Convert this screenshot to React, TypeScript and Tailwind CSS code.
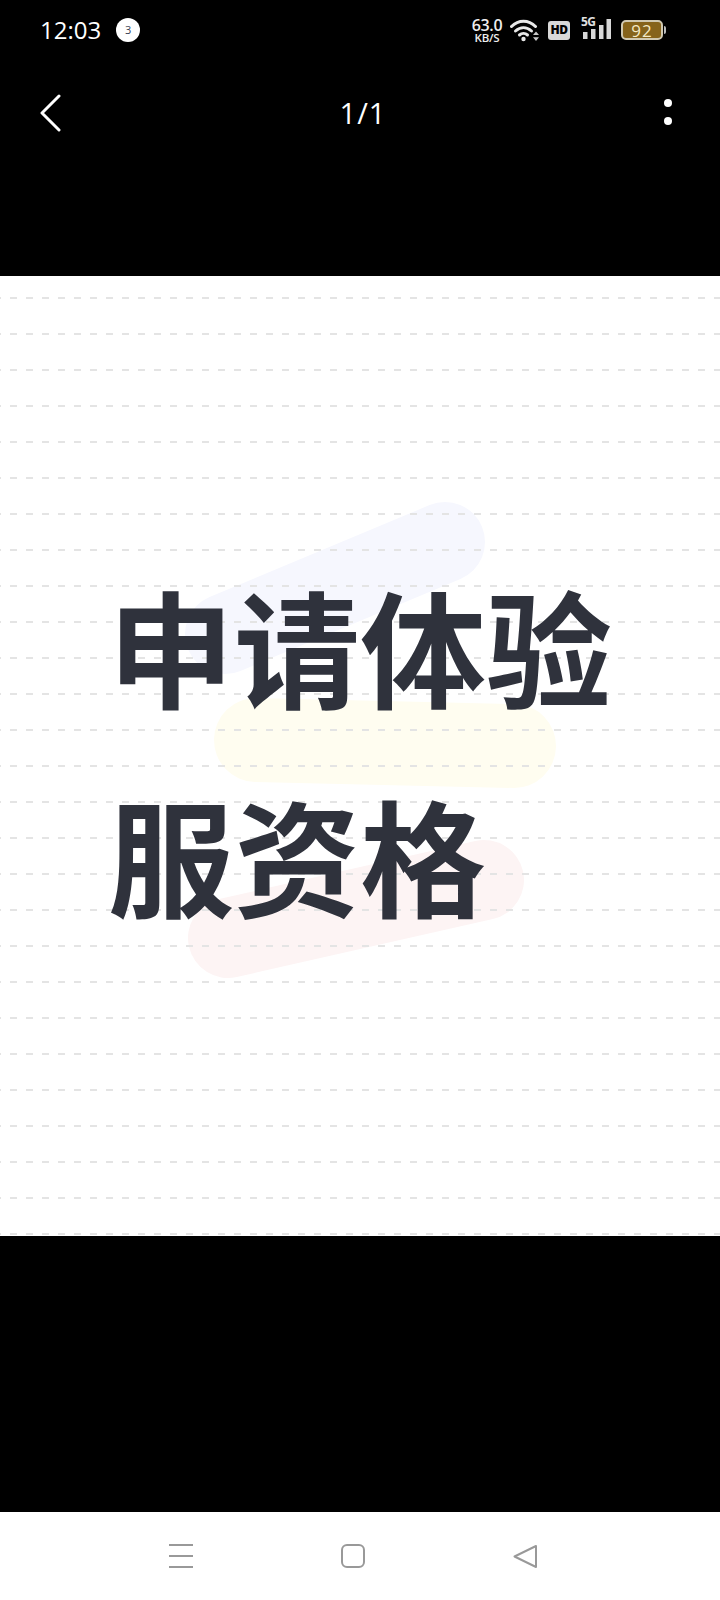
import React from 'react';

const cjk = { fontFamily: '"Noto Sans CJK SC", "Noto Sans", sans-serif' };
const ui = { fontFamily: '"Open Sans", sans-serif' };

function Wifi() {
  return (
    <svg width="30" height="24" viewBox="0 0 30 24" fill="none" stroke="#e8e8e8" strokeWidth="3" strokeLinecap="round">
      <path d="M1.500 8.500C8.500 1.500 18.500 1.500 25.500 8.500" />
      <path d="M5.500 13C10.500 8.500 16.500 8.500 21.500 13" />
      <path d="M9.500 17C11.800 15 15.200 15 17.500 17" />
      <circle cx="13.500" cy="21" r="2.200" fill="#e8e8e8" stroke="none" />
      <path d="M26 13.500l-3 3.500h6zM26 23l-3-3.800h6z" fill="#c8c8c8" stroke="none" />
    </svg>
  );
}

function Signal() {
  return (
    <svg width="32" height="22" viewBox="0 0 32 22" fill="#d8d8d8">
      <rect x="2" y="13" width="4.500" height="7" />
      <rect x="10" y="10" width="4.500" height="10" />
      <rect x="18" y="6" width="4.500" height="14" />
      <rect x="25.500" y="0" width="4.500" height="20" />
    </svg>
  );
}

function StatusBar() {
  return (
    <div className="flex h-[60px] items-center justify-between pl-10 pr-[54px] text-white">
      <div className="flex items-center gap-[15px]">
        <span className="text-[24px] leading-none" style={ui}>12:03</span>
        <span className="flex h-6 w-6 items-center justify-center rounded-full bg-white text-[11px] text-gray-700" style={ui}>3</span>
      </div>
      <div className="flex items-center" style={ui}>
        <div className="flex w-[34px] flex-col items-center font-semibold text-[#eeeeee]">
          <span className="text-[16px] leading-[15px] tracking-[-0.3px]">63.0</span>
          <span className="text-[11.500px] leading-[10px] tracking-[-0.2px]">KB/S</span>
        </div>
        <div className="ml-1.5"><Wifi /></div>
        <span className="ml-2 flex h-[19px] w-[22px] items-center justify-center rounded-[3px] bg-[#d8d8d8] text-[12px] font-extrabold tracking-[-0.5px] text-black">HD</span>
        <div className="relative ml-[11px] h-[22px] w-[32px]">
          <Signal />
          <span className="absolute -top-[3px] left-0 text-[12px] font-bold leading-none tracking-[-0.5px] text-[#e0e0e0]">5G</span>
        </div>
        <div className="ml-[8px] flex items-center">
          <div className="flex h-5 w-[42px] items-center justify-center rounded-[5px] border-2 border-[#d0c8b0] bg-[#86631a] text-[17px] leading-none tracking-[1px] text-[#f5e9c4]">92</div>
          <div className="ml-px h-2 w-0.5 rounded-r-sm bg-[#bbbbbb]" />
        </div>
      </div>
    </div>
  );
}

function TopBar() {
  return (
    <div className="relative flex h-[100px] items-start justify-between pl-10 pr-12 pt-[34px] text-white">
      <svg width="22" height="38" viewBox="0 0 22 38" fill="none" stroke="white" strokeWidth="3" strokeLinecap="round" strokeLinejoin="round">
        <path d="M19 2L2 19l17 17" />
      </svg>
      <span className="pt-0.5 text-[29px] leading-[34px] tracking-[1px]" style={ui}>1/1</span>
      <div className="flex flex-col gap-[10px] pt-[5px]">
        <span className="h-2 w-2 rounded-full bg-white" />
        <span className="h-2 w-2 rounded-full bg-white" />
      </div>
    </div>
  );
}

function Backdrop() {
  return (
    <svg className="absolute inset-0 h-full w-full" viewBox="0 0 720 960" fill="none">
      <defs>
        <pattern id="dash" x="-6" y="4" width="16" height="36" patternUnits="userSpaceOnUse">
          <rect x="0" y="17" width="7" height="2" fill="#e4e4e4" />
        </pattern>
      </defs>
      <path d="M225 358L445 266" stroke="#f6f7fe" strokeWidth="80" strokeLinecap="round" />
      <path d="M256 464L514 470" stroke="#fffdf0" strokeWidth="84" strokeLinecap="round" />
      <path d="M228 662L484 604" stroke="#fdf4f4" strokeWidth="80" strokeLinecap="round" />
      <rect width="720" height="960" fill="url(#dash)" />
    </svg>
  );
}

function Poster() {
  return (
    <div className="relative h-[960px] overflow-hidden bg-white">
      <Backdrop />
      <div className="relative pl-[108px] pt-[264px] text-[126px] font-bold leading-[209px] text-[#2f323c]" style={cjk}>
        <div>申请体验</div>
        <div>服资格</div>
      </div>
    </div>
  );
}

function NavBar() {
  return (
    <div className="flex h-[88px] items-center justify-between bg-white pl-[169px] pr-[183px]">
      <div className="flex w-6 flex-col gap-[9px]">
        <span className="h-0.5 bg-[#999999]" />
        <span className="h-0.5 bg-[#999999]" />
        <span className="h-0.5 bg-[#999999]" />
      </div>
      <span className="h-6 w-6 rounded-[6px] border-2 border-[#999999]" />
      <svg width="24" height="24" viewBox="0 0 24 24" fill="none" stroke="#999999" strokeWidth="2" strokeLinejoin="round">
        <path d="M23 2v21L1.500 12.500z" />
      </svg>
    </div>
  );
}

export default function App() {
  return (
    <div className="flex h-[1600px] w-[720px] flex-col bg-black">
      <StatusBar />
      <TopBar />
      <div className="h-[116px]" />
      <Poster />
      <div className="flex-1" />
      <NavBar />
    </div>
  );
}
